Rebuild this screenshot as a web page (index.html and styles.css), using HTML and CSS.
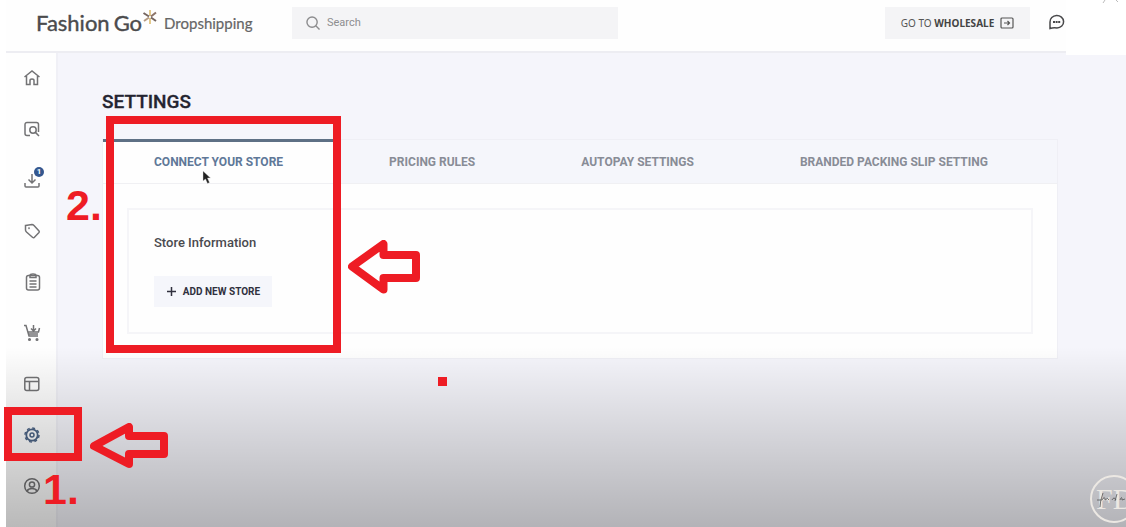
FILE: index.html
```html
<!DOCTYPE html>
<html lang="en">
<head>
<meta charset="utf-8">
<title>Settings - FashionGo Dropshipping</title>
<link rel="stylesheet" href="styles.css">
</head>
<body>
<div class="app">
  <header class="header">
    <a class="brand" href="#">
      <span class="brand-name">Fashion</span>
      <span class="brand-name brand-go">Go</span>
      <svg class="brand-star" width="16" height="16" viewBox="0 0 16 16" fill="none" stroke-width="2">
        <path d="M8 1v6M8 9v6" stroke="#e3c98c"/>
        <path d="M1.500 4l5.500 3.500M9 8.500l5 3.500" stroke="#75655f"/>
        <path d="M14 3.500L9 7.500" stroke="#8c7468"/>
        <path d="M7 8.500L2 12" stroke="#b59b83"/>
      </svg>
      <span class="brand-sub">Dropshipping</span>
    </a>
    <label class="search">
      <svg width="14" height="14" viewBox="0 0 15 15" fill="none" stroke="#8c8c8e" stroke-width="1.500"><circle cx="6.500" cy="6.500" r="5.500"/><path d="M10.500 10.500l4 4"/></svg>
      <input class="search-input" type="text" placeholder="Search" aria-label="Search">
    </label>
    <button class="wholesale" type="button">
      <span>GO TO <b>WHOLESALE</b></span>
      <svg width="14" height="12" viewBox="0 0 14 12" fill="none" stroke="#555" stroke-width="1.200"><rect x="1" y="1" width="12" height="10" rx="1"/><path d="M4 6h5M7.500 4l2 2-2 2"/></svg>
    </button>
    <button class="chat" type="button" aria-label="Messages">
      <svg width="17" height="17" viewBox="0 0 17 17" fill="none" stroke="#49494b" stroke-width="1.500"><path d="M2 14.500V8A6.800 6.300 0 1 1 9 14Q5 13.500 2 14.500z"/><path d="M5 8h7.500" stroke-width="1.800" stroke-dasharray="2 .6"/></svg>
    </button>
  </header>

  <div class="body">
    <nav class="sidebar" aria-label="Main">
      <a class="nav-item" href="#" aria-label="Home"><svg class="icon" viewBox="0 0 18 18"><path d="M1.500 8L9 2l7.500 6M3.500 7v8.500h3.500v-4q0-1.500 2-1.500t2 1.500v4h3.500V7"/></svg></a>
      <a class="nav-item" href="#" aria-label="Find products"><svg class="icon" viewBox="0 0 18 18"><path d="M7 15.500H4a2 2 0 0 1-2-2v-9a2 2 0 0 1 2-2h9.500a2 2 0 0 1 2 2V12"/><circle cx="10" cy="10" r="3.200"/><path d="M12.400 12.400L16 16"/></svg></a>
      <a class="nav-item" href="#" aria-label="Imports, 1 new"><svg class="icon" viewBox="0 0 18 18"><path d="M9 3v8.500M5.500 8.500L9 12l3.500-3.500M2 12v3q0 1 1 1h12q1 0 1-1v-3"/></svg><span class="badge">1</span></a>
      <a class="nav-item" href="#" aria-label="Tags"><svg class="icon" viewBox="0 0 18 18"><path d="M2.500 3.500l6.500-1q1 0 2 1l5 5.500q.600.800 0 1.500l-4.800 5q-.700.600-1.500 0L3.500 10q-1-1-1-2z"/><circle cx="6" cy="6.300" r=".3"/></svg></a>
      <a class="nav-item" href="#" aria-label="Orders"><svg class="icon" viewBox="0 0 18 18"><rect x="3.500" y="2.500" width="13" height="14.500" rx="2"/><path d="M7 4.500V2.500q0-1.500 3-1.500t3 1.500v2zM6.500 8h7M6.500 11h7M6.500 14h7"/></svg></a>
      <a class="nav-item" href="#" aria-label="Cart"><svg class="icon" viewBox="0 0 18 18"><path d="M1 1.500h2l3 10.500h9M5.500 8h10l1-4M5.500 10h9.500M10.500 1v6M8 4.500L10.500 7 13 4.500"/><circle cx="6.500" cy="15.500" r=".8"/><circle cx="14" cy="15.500" r=".8"/></svg></a>
      <a class="nav-item" href="#" aria-label="Layout"><svg class="icon" viewBox="0 0 18 18"><rect x="1.800" y="2.500" width="14" height="13" rx="2"/><path d="M2 6.500h14M6.500 6.500v9"/></svg></a>
      <a class="nav-item nav-active" href="#" aria-label="Settings"><svg class="icon" viewBox="0 0 18 18"><circle cx="9" cy="9" r="5.700" stroke-width="1.800"/><circle cx="9" cy="9" r="7" stroke-width="1.500" stroke-dasharray="2.900 2.600"/><circle cx="9" cy="9" r="2"/></svg></a>
      <a class="nav-item" href="#" aria-label="Account"><svg class="icon" viewBox="0 0 18 18"><circle cx="9" cy="9" r="7.300"/><circle cx="9" cy="7.500" r="2.600"/><path d="M4 14q1.500-2.500 5-2.500t5 2.500"/></svg></a>
    </nav>

    <main class="main">
      <h1 class="title">SETTINGS</h1>
      <section class="panel">
        <div class="tabs" role="tablist">
          <button class="tab tab-active" type="button" role="tab" aria-selected="true">CONNECT YOUR STORE</button>
          <button class="tab" type="button" role="tab">PRICING RULES</button>
          <button class="tab" type="button" role="tab">AUTOPAY SETTINGS</button>
          <button class="tab" type="button" role="tab">BRANDED PACKING SLIP SETTING</button>
        </div>
        <div class="panel-body">
          <div class="card">
            <h2 class="card-title">Store Information</h2>
            <button class="add" type="button">
              <svg width="11" height="11" viewBox="0 0 11 11" stroke="#30303e" stroke-width="1.500"><path d="M5.500 1v9M1 5.500h9"/></svg>
              <span>ADD NEW STORE</span>
            </button>
          </div>
        </div>
      </section>
    </main>
  </div>
</div>

<div class="shade"></div>
<div class="corner"><svg width="60" height="6" viewBox="0 0 60 6" stroke="#bbb" fill="none"><path d="M37 3l2-3M50 0l2 2"/></svg></div>

<svg class="watermark" width="36" height="50" viewBox="0 0 36 50" aria-label="FD">
  <circle cx="24" cy="25" r="23" fill="none" stroke="#ece8e3" stroke-width="2"/>
  <text class="monogram" x="6" y="35">FD</text>
  <path d="M7 26h5M13 19q-3 8-3 14M12 26q3-5 3 0 3-3 4 0M22 26q2-4 4 0M27 20l-2 7M30 26q2-5 2 0l3-1" fill="none" stroke="#555" stroke-width=".8"/>
</svg>

<svg class="pointer" width="9" height="15" viewBox="0 0 9 15"><path d="M1 1v10l2.500-2L5.500 13.500l2-1L5.500 8H8.500z" fill="#222" stroke="#ddd" stroke-width=".4"/></svg>

<div class="mark mark-store"></div>
<div class="mark mark-settings"></div>
<div class="dot"></div>
<span class="step step-one">1.</span>
<span class="step step-two">2.</span>
<svg class="arrow arrow-store" width="72" height="54" viewBox="0 0 72 54"><path d="M4 26.500L35.500 4V15H68V38H35.500V49.500z"/></svg>
<svg class="arrow arrow-settings" width="78" height="46" viewBox="0 0 78 46"><path d="M4 23L39 4V13H74V31H39V41z"/></svg>
</body>
</html>
```
FILE: styles.css
```css
* { box-sizing: border-box; }

body {
  position: relative;
  margin: 0;
  min-height: 100vh;
  background: #fff;
  font-family: Roboto, "Liberation Sans", sans-serif;
  overflow: hidden;
}

button {
  border: 0;
  padding: 0;
  background: none;
  font: inherit;
  color: inherit;
}

a { color: inherit; text-decoration: none; }

.app {
  display: flex;
  flex-direction: column;
  min-height: 100vh;
  padding-left: 6px;
}

/* Header */
.header {
  display: flex;
  align-items: center;
  padding: 0 61px 6px 30px;
  height: 53px;
  background: #fefefe;
  border-bottom: 2px solid #ededf2;
}

.brand {
  display: flex;
  align-items: center;
  flex: none;
  width: 256px;
  font-family: Lato, sans-serif;
  color: #4b4b4d;
}

.brand-name { font-size: 22px; line-height: 32px; -webkit-text-stroke: 0.4px #4b4b4d; }
.brand-go { margin-left: 4px; }
.brand-star { align-self: flex-start; margin-right: 6px; margin-top: 2px; }
.brand-sub { font-size: 15px; color: #666; -webkit-text-stroke: 0.2px #666; }

.search {
  display: flex;
  align-items: center;
  flex: 0 1 326px;
  gap: 5px;
  height: 32px;
  padding: 0 14px;
  background: #f4f4f6;
}

.search-input {
  flex: 1;
  min-width: 0;
  border: 0;
  outline: 0;
  background: none;
  font: 11px Roboto, sans-serif;
}
.search-input::placeholder { color: #8e8e90; opacity: 1; }

.wholesale {
  display: flex;
  align-items: center;
  justify-content: center;
  gap: 6px;
  width: 145px;
  height: 32px;
  margin-left: auto;
  background: #f4f4f6;
  font-family: "Noto Sans", sans-serif;
  font-size: 10px;
  color: #555;
}
.wholesale b { color: #444; }

.chat { display: flex; margin-left: 18px; }

/* Sidebar */
.body { display: flex; flex: 1; }

.sidebar {
  flex: none;
  width: 52px;
  background: #fefefe;
  border-right: 2px solid #f0f0f6;
}

.nav-item {
  display: flex;
  align-items: center;
  justify-content: center;
  position: relative;
  height: 51px;
  padding: 0 0 1px 1px;
  color: #737375;
}
.nav-active { color: #4d6587; }

.icon {
  width: 18px;
  height: 18px;
  fill: none;
  stroke: currentColor;
  stroke-width: 1.5;
}

.badge {
  position: absolute;
  top: 12px;
  right: 12px;
  width: 10px;
  height: 10px;
  border-radius: 50%;
  background: #34578f;
  color: #fff;
  font-size: 8px;
  font-weight: 700;
  line-height: 10px;
  text-align: center;
}

/* Settings page */
.main {
  flex: 1;
  min-width: 0;
  padding: 37px 68px 0 44px;
  background: #f5f5fb;
}

.title {
  margin: 0 0 25px;
  font-size: 19px;
  font-weight: 500;
  line-height: 24px;
  color: #242430;
  -webkit-text-stroke: 0.3px #242430;
}

.panel {
  background: #fefefe;
  border: 1px solid #efeff5;
}

.tabs {
  display: flex;
  height: 44px;
  background: #f5f6fb;
  border-bottom: 1px solid #f0f0f3;
}

.tab {
  flex: none;
  padding: 0 53px;
  font-size: 12px;
  font-weight: 700;
  color: #888c96;
}

.tab-active {
  height: 44px;
  margin-top: -1px;
  padding: 0 53px 2px 51px;
  border-top: 3px solid #5e7085;
  background: #fefefe;
  color: #5f7898;
}

.panel-body { padding: 24px; }

.card {
  padding: 23px 25px 25px;
  border: 2px solid #f5f5f8;
}

.card-title {
  margin: 0 0 23px;
  font-size: 13px;
  font-weight: 500;
  line-height: 20px;
  color: #4a4a4e;
}

.add {
  display: flex;
  align-items: center;
  justify-content: center;
  gap: 6px;
  width: 118px;
  height: 31px;
  background: #f5f6fb;
  font-size: 10px;
  font-weight: 700;
  color: #30303e;
}

/* Video overlays */
.shade {
  position: absolute;
  right: 0;
  bottom: 0;
  left: 6px;
  height: 180px;
  background: linear-gradient(rgba(0, 0, 0, 0), rgba(0, 0, 0, .27));
}

.corner {
  position: absolute;
  top: 0;
  right: 0;
  width: 60px;
  height: 55px;
  background: #fff;
  line-height: 0;
}

.watermark { position: absolute; right: 0; bottom: 3px; }
.monogram { font: 30px "Liberation Serif", serif; fill: #ece8e3; }

/* Annotations */
.pointer { position: absolute; top: 170px; left: 202px; }

.mark { position: absolute; border: 8px solid #ee1c24; }
.mark-store { top: 116px; left: 106px; width: 235px; height: 237px; }
.mark-settings { top: 407px; left: 4px; width: 78px; height: 54px; }

.dot {
  position: absolute;
  top: 377px;
  left: 438px;
  width: 9px;
  height: 9px;
  background: #ee1c24;
}

.step {
  position: absolute;
  font: 700 43px/48px "Liberation Sans", sans-serif;
  color: #ee1c24;
}
.step-one { top: 465px; left: 43px; }
.step-two { top: 181px; left: 66px; }

.arrow {
  position: absolute;
  fill: none;
  stroke: #ee1c24;
  stroke-width: 8;
  stroke-linejoin: round;
}
.arrow-store { top: 240px; left: 348px; }
.arrow-settings { top: 423px; left: 90px; }
```
